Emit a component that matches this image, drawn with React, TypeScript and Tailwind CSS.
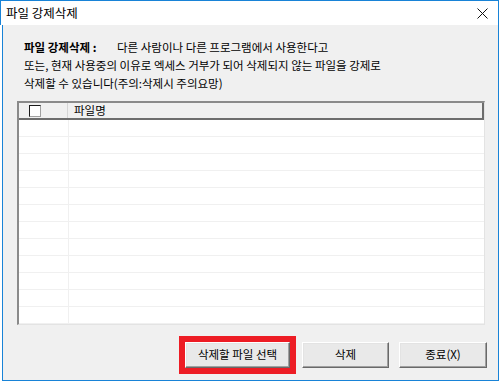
import React from "react";

const font = { fontFamily: '"Noto Sans CJK KR", "Noto Sans", sans-serif' };

function Button({ label }: { label: string }) {
  return (
    <button
      type="button"
      className="flex h-[26px] w-full items-center justify-center border border-t-white border-l-white border-r-[#696969] border-b-[#696969] bg-[#e9e9e9] text-[11.5px] text-black shadow-[inset_-1px_-1px_0_#a0a0a0,inset_1px_1px_0_#e3e3e3]"
    >
      {label}
    </button>
  );
}

export default function App() {
  const rows = Array.from({ length: 12 });

  return (
    <div className="h-[382px] w-[499px] bg-white text-black" style={font}>
      {/* title bar */}
      <div className="flex h-[25px] items-center justify-between border-l border-r border-t border-[#1883d7] bg-white pl-[5px] pr-[9px]">
        <span className="text-[12.5px] leading-none">파일 강제삭제</span>
        <svg width="11" height="11" viewBox="0 0 11 11" className="mr-[1px]">
          <path d="M0.5 0.5 L10.5 10.5 M10.5 0.5 L0.5 10.5" stroke="#111" strokeWidth="1" />
        </svg>
      </div>

      {/* body */}
      <div className="ml-[2px] flex h-[356px] w-[497px] flex-col border-b border-l border-r border-[#1883d7] bg-[#f0f0f0]">
        <div className="pl-[21px] pt-[13px] text-[11.5px] leading-[18px]">
          <div className="flex">
            <span className="w-[93px] font-bold">파일 강제삭제 :</span>
            <span>다른 사람이나 다른 프로그램에서 사용한다고</span>
          </div>
          <div>또는, 현재 사용중의 이유로 엑세스 거부가 되어 삭제되지 않는 파일을 강제로</div>
          <div>삭제할 수 있습니다(주의:삭제시 주의요망)</div>
        </div>

        {/* list */}
        <div className="ml-[14px] mt-[9px] flex h-[224px] w-[468px] flex-col overflow-hidden border-l-2 border-t-2 border-b border-r border-l-[#8a8a8a] border-t-[#8a8a8a] border-b-[#e3e3e3] border-r-[#e3e3e3] bg-white">
          <div className="flex h-[17px] shrink-0 border-b-2 border-r-2 border-[#6d6d6d] bg-[#f0f0f0] text-[11.5px]">
            <div className="flex w-[49px] items-center border-r border-[#d5d5d5] pl-[10px]">
              <span className="block h-[12px] w-[12px] border border-b-[#a0a0a0] border-l-[#1a1a1a] border-r-[#a0a0a0] border-t-[#1a1a1a] bg-white" />
            </div>
            <div className="flex items-center pl-[6px] leading-none">파일명</div>
          </div>
          {rows.map((_, i) => (
            <div key={i} className="flex h-[17px] shrink-0 border-b border-[#f0f0f0]">
              <div className="w-[50px] border-r border-[#f0f0f0]" />
              <div className="flex-1" />
            </div>
          ))}
        </div>

        {/* buttons */}
        <div className="mt-[11px] flex items-center pl-[176px]">
          <div className="border-[6px] border-[#ed1c24]">
            <div className="w-[105px]">
              <Button label="삭제할 파일 선택" />
            </div>
          </div>
          <div className="ml-[6px] w-[87px]">
            <Button label="삭제" />
          </div>
          <div className="ml-[10px] w-[88px]">
            <Button label="종료(X)" />
          </div>
        </div>
      </div>
    </div>
  );
}
